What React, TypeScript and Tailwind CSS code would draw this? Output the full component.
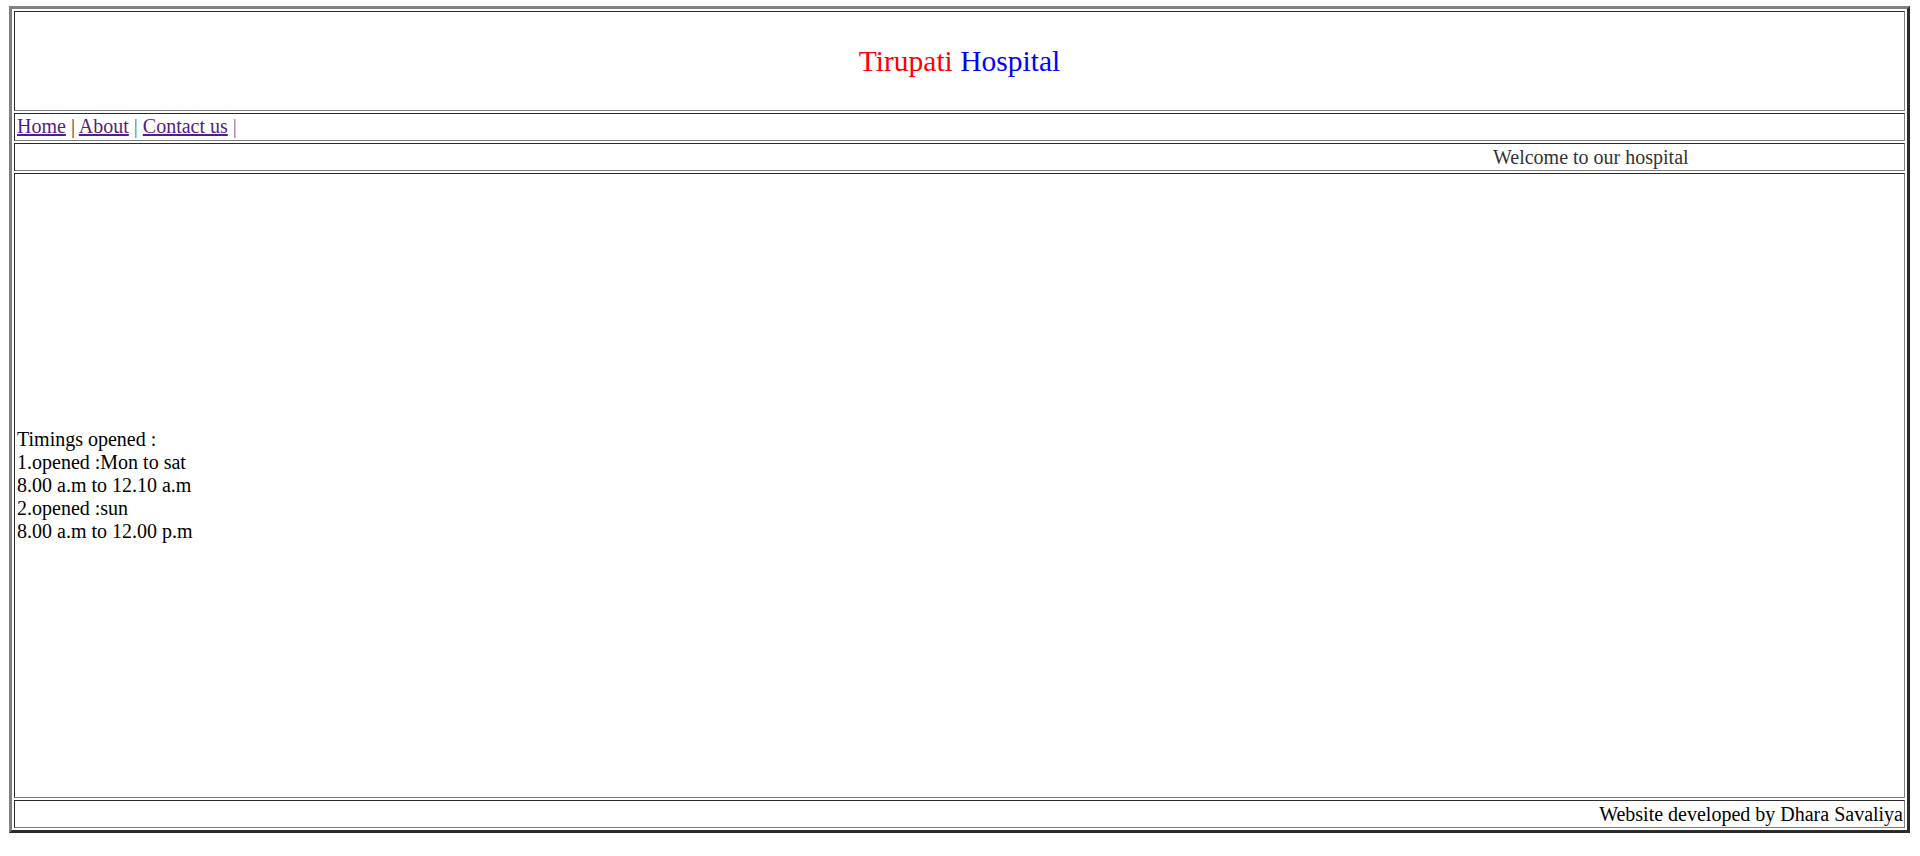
import React from "react"

const cell =
  "border border-t-[#2b2b2b] border-l-[#2b2b2b] border-b-[#808080] border-r-[#808080] p-px"

const timings = [
  "Timings opened :",
  "1.opened :Mon to sat",
  "8.00 a.m to 12.10 a.m",
  "2.opened :sun",
  "8.00 a.m to 12.00 p.m",
]

export default function App() {
  return (
    <div className="min-h-screen bg-white pt-[6px] pl-[9px] font-['Liberation_Serif','Times_New_Roman',serif] text-[20px] leading-[23px] text-black">
      <div className="w-[1901px] h-[827px] border-[3px] border-t-[#808080] border-l-[#808080] border-b-[#2b2b2b] border-r-[#2b2b2b] p-[2px] flex flex-col gap-[2px]">
        {/* header */}
        <div className={`${cell} h-[100px] flex items-center justify-center`}>
          <p className="text-[29.5px] leading-[33px]">
            <span className="text-[#ff0000]">Tirupati</span>{" "}
            <span className="text-[#0000ff]">Hospital</span>
          </p>
        </div>

        {/* nav */}
        <div className={`${cell} h-[28px] flex items-center pl-[2px]`}>
          <p className="-mt-px">
            <a href="#" className="text-[#551a8b] underline">Home</a>
            <span className="text-[#444]"> | </span>
            <a href="#" className="text-[#551a8b] underline">About</a>
            <span className="text-[#5a6f9e]"> | </span>
            <a href="#" className="text-[#551a8b] underline">Contact us</a>
            <span className="text-[#5a6f9e]"> |</span>
          </p>
        </div>

        {/* marquee row */}
        <div className={`${cell} h-[28px] flex items-center overflow-hidden`}>
          <p className="pl-[1477px] whitespace-nowrap text-[#333]">Welcome to our hospital</p>
        </div>

        {/* main */}
        <div className={`${cell} h-[625px] flex flex-col justify-center pl-[2px]`}>
          {timings.map((t) => (
            <p key={t}>{t}</p>
          ))}
        </div>

        {/* footer */}
        <div className={`${cell} h-[28px] flex items-center justify-end`}>
          <p>Website developed by Dhara Savaliya</p>
        </div>
      </div>
    </div>
  )
}
